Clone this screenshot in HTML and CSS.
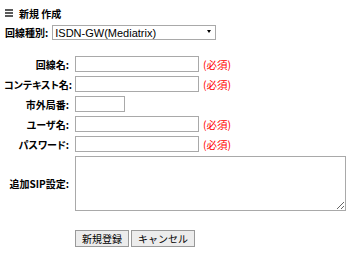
FILE: index.html
```html
<!DOCTYPE html>
<html lang="ja">
<head>
    <meta charset="UTF-8">
    <title>新規作成</title>
    <link rel="stylesheet" href="styles.css">
</head>
<body>

<div class="title">
    <svg class="title-icon" width="8" height="8" viewBox="0 0 8 8">
        <rect x="0" y="0" width="8" height="2" fill="#5a5a5a"/>
        <rect x="0" y="3" width="8" height="2" fill="#5a5a5a"/>
        <rect x="0" y="6" width="8" height="2" fill="#5a5a5a"/>
    </svg>
    <span>新規 作成</span>
</div>

<div class="type-row">
    <label class="type-label">回線種別:</label>
    <span class="select-wrap">
        <select class="type-select">
            <option>ISDN-GW(Mediatrix)</option>
        </select>
    </span>
</div>

<form class="line-form">
    <label class="field-label">回線名:</label>
    <div class="field">
        <input type="text" class="text-input">
        <span class="required">(必須)</span>
    </div>

    <label class="field-label">コンテキスト名:</label>
    <div class="field">
        <input type="text" class="text-input">
        <span class="required">(必須)</span>
    </div>

    <label class="field-label">市外局番:</label>
    <div class="field">
        <input type="text" class="text-input short">
    </div>

    <label class="field-label">ユーザ名:</label>
    <div class="field">
        <input type="text" class="text-input">
        <span class="required">(必須)</span>
    </div>

    <label class="field-label">パスワード:</label>
    <div class="field">
        <input type="password" class="text-input">
        <span class="required">(必須)</span>
    </div>

    <label class="field-label">追加SIP設定:</label>
    <div class="field">
        <textarea class="sip-area"></textarea>
    </div>

    <div></div>
    <div class="buttons">
        <button type="submit">新規登録</button>
        <button type="button">キャンセル</button>
    </div>
</form>

</body>
</html>
```

FILE: styles.css
```css
body {
    margin: 0;
    padding: 6px 4px;
    font-family: "Noto Sans CJK JP", sans-serif;
    font-size: 10px;
    color: #000;
}
.title {
    display: flex;
    align-items: center;
    gap: 6px;
    height: 14px;
    padding-left: 1px;
    font-weight: bold;
    font-feature-settings: "palt";
}
.title-icon {
    display: block;
}
.type-row {
    display: flex;
    align-items: center;
    gap: 4px;
    margin-top: 5px;
    padding-left: 1px;
}
.type-label {
    font-weight: bold;
}
.select-wrap {
    position: relative;
    display: inline-block;
}
.select-wrap::after {
    content: "";
    position: absolute;
    right: 5px;
    top: 5px;
    border-left: 2.5px solid transparent;
    border-right: 2.5px solid transparent;
    border-top: 3px solid #000;
    pointer-events: none;
}
.type-select {
    -webkit-appearance: none;
    appearance: none;
    display: block;
    width: 164px;
    height: 15px;
    margin: 0;
    padding: 0 2px;
    border: 1px solid #a9a9a9;
    border-radius: 0;
    background: #fff;
    font-family: "Liberation Sans", Arial, sans-serif;
    font-size: 11px;
    color: #000;
}
.line-form {
    display: grid;
    grid-template-columns: 65px auto;
    column-gap: 6px;
    row-gap: 4px;
    margin-top: 16px;
}
.field-label {
    align-self: center;
    text-align: right;
    white-space: nowrap;
    font-weight: bold;
    font-feature-settings: "palt";
}
.field {
    display: flex;
    align-items: center;
    gap: 4px;
}
.text-input {
    box-sizing: border-box;
    width: 124px;
    height: 16px;
    margin: 0;
    padding: 0 2px;
    border: 1px solid #a9a9a9;
    font-size: 10px;
}
.text-input.short {
    width: 50px;
}
.required {
    color: #f00;
    font-size: 10.5px;
}
.sip-area {
    box-sizing: border-box;
    width: 271px;
    height: 55px;
    margin: 0;
    padding: 2px;
    border: 1px solid #a9a9a9;
    font-size: 10px;
}
.buttons {
    display: flex;
    gap: 2px;
    margin-top: 15px;
}
.buttons button {
    height: 17px;
    margin: 0;
    padding: 0 6px;
    border: 1px solid #999;
    border-radius: 0;
    background: #ececec;
    font-family: "Noto Sans CJK JP", sans-serif;
    font-size: 10px;
    color: #000;
}
```
